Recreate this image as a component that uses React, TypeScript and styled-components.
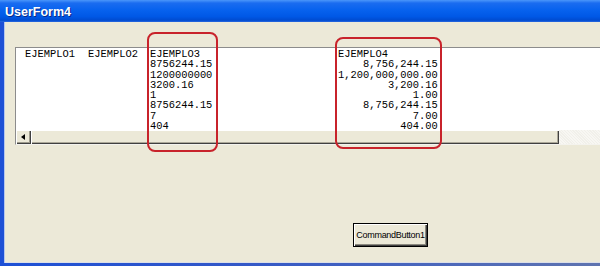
import React from "react";
import styled, { createGlobalStyle } from "styled-components";

const GlobalStyle = createGlobalStyle`
  html, body {
    margin: 0;
    padding: 0;
    background: #ece9d8;
  }
  * {
    box-sizing: border-box;
  }
`;

type Column = {
  header: string;
  values: string[];
  width: number;
  alignRight?: boolean;
};

const columns: Column[] = [
  { header: "EJEMPLO1", values: [], width: 63 },
  { header: "EJEMPLO2", values: [], width: 62 },
  {
    header: "EJEMPLO3",
    values: ["8756244.15", "1200000000", "3200.16", "1", "8756244.15", "7", "404"],
    width: 188,
  },
  {
    header: "EJEMPLO4",
    values: [
      "8,756,244.15",
      "1,200,000,000.00",
      "3,200.16",
      "1.00",
      "8,756,244.15",
      "7.00",
      "404.00",
    ],
    width: 120,
    alignRight: true,
  },
];

const App = (): JSX.Element => {
  return (
    <>
      <GlobalStyle />
      <Window>
        <TitleBar>
          <TitleText>UserForm4</TitleText>
        </TitleBar>
        <Body>
          <ListBox>
            <ListRows>
              {columns.map((col) => (
                <ListColumn key={col.header} $width={col.width}>
                  <ColumnStack $alignRight={col.alignRight}>
                    <Cell $header>{col.header}</Cell>
                    {col.values.map((v, i) => (
                      <Cell key={i}>{v}</Cell>
                    ))}
                  </ColumnStack>
                </ListColumn>
              ))}
            </ListRows>
            <HScroll>
              <ScrollButton>
                <LeftArrow />
              </ScrollButton>
              <ScrollThumb />
              <ScrollTrack />
            </HScroll>
          </ListBox>
          <ButtonRow>
            <CommandButton>CommandButton1</CommandButton>
          </ButtonRow>
        </Body>
        <Highlight $left={147} $top={32} $width={71} $height={120} />
        <Highlight $left={335} $top={37} $width={107} $height={112} />
      </Window>
    </>
  );
};

const Window = styled.div`
  position: relative;
  width: 600px;
  height: 266px;
  overflow: hidden;
  display: flex;
  flex-direction: column;
  background: linear-gradient(to right, #1d50d6 0%, #3358c8 40%, #5f74b0 100%);
`;

const TitleBar = styled.div`
  height: 22px;
  flex-shrink: 0;
  display: flex;
  align-items: center;
  padding: 2px 0 0 5px;
  background: linear-gradient(
    to bottom,
    #4a96fa 0%,
    #1a6cf0 14%,
    #0762ee 45%,
    #0058e6 75%,
    #004bd0 92%,
    #2c6ae0 100%
  );
`;

const TitleText = styled.span`
  font-family: "Liberation Sans", Arial, sans-serif;
  font-weight: bold;
  font-size: 12.5px;
  color: #ffffff;
  text-shadow: 1px 1px 0 #0a2a8a;
`;

const Body = styled.div`
  flex: 1;
  margin: 0 0 3px 4px;
  padding: 25px 0 0 11px;
  background: #ece9d8;
  box-shadow: inset 1px 0 0 #b4c6ee, inset 0 -1px 0 #dcdfe8;
  display: flex;
  flex-direction: column;
`;

const ListBox = styled.div`
  width: 640px;
  background: #ffffff;
  border-top: 1px solid #8c8c8c;
  border-left: 1px solid #8c8c8c;
  border-bottom: 1px solid #f4f3ee;
  display: flex;
  flex-direction: column;
`;

const ListRows = styled.div`
  height: 82px;
  padding: 1px 0 0 9px;
  display: flex;
  align-items: flex-start;
`;

const ListColumn = styled.div<{ $width: number }>`
  width: ${(p) => p.$width}px;
  flex-shrink: 0;
  display: flex;
  align-items: flex-start;
`;

const ColumnStack = styled.div<{ $alignRight?: boolean }>`
  display: flex;
  flex-direction: column;
  align-items: ${(p) => (p.$alignRight ? "flex-end" : "flex-start")};
`;

const Cell = styled.div<{ $header?: boolean }>`
  font-family: "Liberation Mono", "Courier New", monospace;
  font-size: 10.4px;
  line-height: 10.3px;
  height: 10.3px;
  color: #000000;
  white-space: pre;
  align-self: ${(p) => (p.$header ? "flex-start" : "auto")};
`;

const HScroll = styled.div`
  height: 14px;
  display: flex;
  background: #f3f2ec;
`;

const ScrollButton = styled.div`
  width: 15px;
  height: 14px;
  flex-shrink: 0;
  display: flex;
  align-items: center;
  justify-content: center;
  background: #ece9d8;
  box-shadow: inset 1px 1px 0 #ffffff, inset -1px -1px 0 #404040,
    inset -2px -2px 0 #9d9a8c;
`;

const LeftArrow = styled.div`
  width: 0;
  height: 0;
  border-top: 3.5px solid transparent;
  border-bottom: 3.5px solid transparent;
  border-right: 4px solid #000000;
  margin-right: 1px;
`;

const ScrollThumb = styled.div`
  width: 528px;
  height: 14px;
  flex-shrink: 0;
  background: #ece9d8;
  box-shadow: inset 1px 1px 0 #ffffff, inset -1px -1px 0 #404040,
    inset -2px -2px 0 #aca899;
`;

const ScrollTrack = styled.div`
  flex: 1;
  background: repeating-linear-gradient(
    45deg,
    #f8f7f3 0px,
    #f8f7f3 1px,
    #f1f0ea 1px,
    #f1f0ea 2px
  );
`;

const ButtonRow = styled.div`
  display: flex;
  padding: 78px 0 0 338px;
`;

const CommandButton = styled.button`
  width: 75px;
  height: 24px;
  padding: 0;
  background: #ece9d8;
  border: 1px solid #000000;
  box-shadow: inset 1px 1px 0 #ffffff, inset -1px -1px 0 #404040,
    inset -2px -2px 0 #8c8a80;
  font-family: "Liberation Sans", Tahoma, sans-serif;
  font-size: 9px;
  letter-spacing: -0.3px;
  color: #000000;
  white-space: nowrap;
`;

const Highlight = styled.div<{
  $left: number;
  $top: number;
  $width: number;
  $height: number;
}>`
  position: absolute;
  left: ${(p) => p.$left}px;
  top: ${(p) => p.$top}px;
  width: ${(p) => p.$width}px;
  height: ${(p) => p.$height}px;
  border: 2px solid #c8232b;
  border-radius: 8px;
  pointer-events: none;
`;

export default App;
